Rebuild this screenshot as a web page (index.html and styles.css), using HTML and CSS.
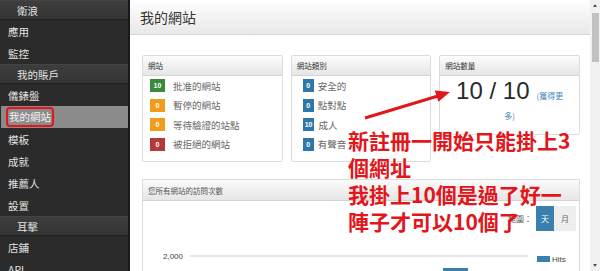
FILE: index.html
```html
<!DOCTYPE html>
<html lang="zh-Hant">
<head>
  <meta charset="UTF-8">
  <title>我的網站</title>
  <link rel="stylesheet" href="styles.css">
</head>
<body>
  <div class="app">
    <aside class="sidebar">
      <div class="nav-head">衛浪</div>
      <div class="nav-item">應用</div>
      <div class="nav-item">監控</div>
      <div class="nav-head">我的賬戶</div>
      <div class="nav-item">儀錶盤</div>
      <div class="nav-item selected"><span class="mark">我的網站</span></div>
      <div class="nav-item">模板</div>
      <div class="nav-item">成就</div>
      <div class="nav-item">推薦人</div>
      <div class="nav-item">設置</div>
      <div class="nav-head">耳擊</div>
      <div class="nav-item">店鋪</div>
      <div class="nav-item">API</div>
    </aside>

    <main class="main">
      <div class="topbar">我的網站</div>

      <div class="content">
        <div class="cards">
          <div class="card">
            <div class="card-head">網站</div>
            <ul class="card-list">
              <li><span class="badge green">10</span>批准的網站</li>
              <li><span class="badge orange">0</span>暫停的網站</li>
              <li><span class="badge orange">0</span>等待驗證的站點</li>
              <li><span class="badge red">0</span>被拒絕的網站</li>
            </ul>
          </div>

          <div class="card">
            <div class="card-head">網站類別</div>
            <ul class="card-list compact">
              <li><span class="badge blue">0</span>安全的</li>
              <li><span class="badge blue">0</span>點對點</li>
              <li><span class="badge blue">10</span>成人</li>
              <li><span class="badge blue">0</span>有聲音</li>
            </ul>
          </div>

          <div class="card">
            <div class="card-head">網站數量</div>
            <div class="count"><span class="count-num">10 / 10</span><span class="more">(獲得更<br>多)</span></div>
          </div>
        </div>

        <div class="panel">
          <div class="panel-head">您所有網站的訪問次數</div>
          <div class="panel-body">
            <div class="range">
              <span class="range-label">範圍：</span>
              <span class="btn active">天</span>
              <span class="btn">月</span>
            </div>
            <svg class="chart" width="437" height="60" viewBox="0 0 437 60">
              <text x="40" y="28" text-anchor="end" class="axis">2,000</text>
              <line x1="47" y1="25" x2="385" y2="25" stroke="#e6e6e6" stroke-width="2"/>
              <line x1="47" y1="41" x2="385" y2="41" stroke="#e6e6e6" stroke-width="2"/>
              <rect x="394" y="25" width="13" height="6" fill="#3a7fae"/>
              <text x="409" y="31" class="axis">Hits</text>
              <rect x="300" y="37" width="25" height="12" fill="#3a7fae"/>
              <text x="312.5" y="46" text-anchor="middle" class="bar-label">1,680</text>
            </svg>
          </div>
        </div>
      </div>

      <svg class="arrow" width="460" height="271" viewBox="0 0 460 271">
        <line x1="235" y1="118" x2="308" y2="96" stroke="#e2161b" stroke-width="3"/>
        <polygon points="320,92 308.4,101.8 304.8,90.4" fill="#e2161b"/>
      </svg>
      <div class="note">新註冊一開始只能掛上3<br>個網址<br>我掛上10個是過了好一<br>陣子才可以10個了</div>
    </main>

    <div class="scrollbar">
      <span class="arrow-up"></span>
      <span class="thumb"></span>
      <span class="arrow-down"></span>
    </div>
  </div>
</body>
</html>
```

FILE: styles.css
```css
body { margin: 0; height: 271px; overflow: hidden; font-family: "Noto Sans CJK TC", "Liberation Sans", sans-serif; background: #fff; }
.app { display: flex; height: 271px; }

.sidebar { width: 128px; flex: none; background: #2b2b2b; border-right: 2px solid #1a1a1a; color: #e2e2e2; font-size: 10.5px; overflow: hidden; }
.nav-head { height: 20px; line-height: 20px; padding-left: 17px; background: linear-gradient(#3d3d3d, #353535); border-top: 1px solid #444; border-bottom: 1px solid #222; box-sizing: border-box; }
.nav-item { height: 22px; display: flex; align-items: center; padding-left: 8px; }
.nav-item.selected { background: #8b8b8b; color: #f4f4f4; padding-left: 5px; margin-left: 1px; }
.mark { border: 2px solid #e8141c; border-radius: 4px; height: 20px; line-height: 16px; box-sizing: border-box; padding: 0 1px; }

.main { position: relative; flex: 1; min-width: 0; }
.topbar { height: 35px; line-height: 35px; padding-left: 10px; font-size: 14px; color: #333; background: linear-gradient(#ffffff, #e8e8e8); border-bottom: 1px solid #d6d6d6; box-sizing: border-box; }
.content { padding: 20px 10px 0 12px; }

.cards { display: flex; gap: 8px; align-items: flex-start; }
.card { flex: 1; border: 1px solid #dcdcdc; border-radius: 2px; background: #fff; }
.card-head { height: 20px; line-height: 20px; padding-left: 5px; font-size: 7.5px; color: #333; background: linear-gradient(#fcfcfc, #e6e6e6); border-bottom: 1px solid #d4d4d4; box-sizing: border-box; }
.card-list { list-style: none; margin: 0; padding: 0 0 7px 7px; font-size: 9.5px; color: #666; }
.card-list li { height: 19.5px; display: flex; align-items: center; gap: 8px; }
.card-list.compact { padding-left: 11px; }
.card-list.compact li { gap: 4px; }
.badge { display: inline-block; width: 15px; height: 13px; line-height: 13px; text-align: center; color: #fff; font-family: "Liberation Sans", sans-serif; font-size: 7px; font-weight: bold; }
.compact .badge { width: auto; min-width: 11px; padding: 0 2px; box-sizing: border-box; }
.green { background: #3a8a3c; }
.orange { background: #ef9d1a; }
.red { background: #b23b37; }
.blue { background: #2f77a8; }

.count { text-align: center; font-size: 8px; line-height: 20px; padding-bottom: 8px; }
.count-num { font-family: "Liberation Sans", sans-serif; font-size: 24px; line-height: 30px; color: #2a2a2a; }
.more { margin-left: 7px; color: #4a86c0; }

.panel { margin-top: 17px; border: 1px solid #dcdcdc; border-bottom: none; }
.panel-head { height: 21px; line-height: 21px; padding-left: 5px; font-size: 7.5px; color: #555; background: linear-gradient(#fbfbfb, #e6e6e6); border-bottom: 1px solid #d4d4d4; box-sizing: border-box; }
.panel-body { padding-top: 5px; }
.range { display: flex; justify-content: flex-end; align-items: center; padding-right: 3px; font-size: 8px; color: #555; height: 25px; }
.range-label { margin-right: 4px; }
.btn { height: 25px; line-height: 25px; text-align: center; width: 18px; background: #eeeeee; color: #666; }
.btn + .btn { width: 22px; }
.btn.active { background: #3a7fae; color: #fff; }
.chart { display: block; }
.axis { font-family: "Liberation Sans", sans-serif; font-size: 8px; fill: #444; }
.bar-label { font-family: "Liberation Sans", sans-serif; font-size: 8px; fill: #fff; }

.arrow { position: absolute; left: 0; top: 0; pointer-events: none; }
.note { position: absolute; left: 218px; top: 127px; font-size: 21px; line-height: 27px; font-weight: bold; color: #e2161b; white-space: nowrap; }

.scrollbar { width: 10px; flex: none; background: #f1f1f1; position: relative; }
.thumb { position: absolute; left: 2px; right: 1px; top: 13px; height: 49px; background: #c1c1c1; }
.arrow-up, .arrow-down { position: absolute; left: 3px; width: 0; height: 0; border-left: 2px solid transparent; border-right: 2px solid transparent; }
.arrow-up { top: 4px; border-bottom: 3px solid #555; }
.arrow-down { bottom: 4px; border-top: 3px solid #555; }
```
